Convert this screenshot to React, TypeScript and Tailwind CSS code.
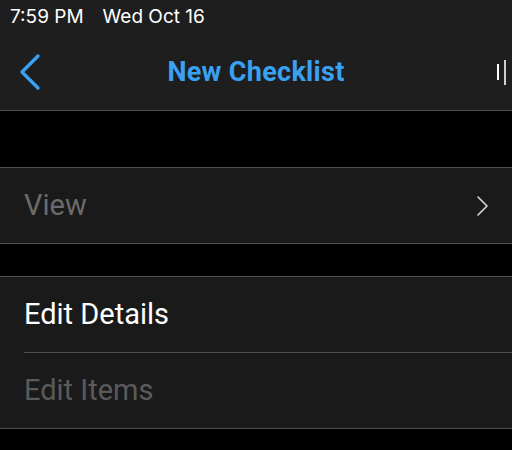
const rowFont = { fontFamily: 'Roboto, "Noto Sans", sans-serif' };

function BackChevron() {
    return (
        <svg width="24" height="38" viewBox="0 0 24 38" fill="none">
            <polyline
                points="19,3 3,19 19,35"
                stroke="#3aa0f2"
                strokeWidth="3.4"
                strokeLinecap="round"
                strokeLinejoin="round"
            />
        </svg>
    );
}

function RowChevron() {
    return (
        <svg width="14" height="22" viewBox="0 0 14 22" fill="none">
            <polyline
                points="3,2 12,11 3,20"
                stroke="#d8d8d8"
                strokeWidth="1.6"
                strokeLinecap="round"
                strokeLinejoin="round"
            />
        </svg>
    );
}

export default function App() {
    return (
        <div className="h-[450px] w-full overflow-hidden bg-black" style={rowFont}>
            {/* header: status bar + nav */}
            <div className="bg-[#1e1e1e] border-b border-[#505050]">
                <div
                    className="h-[34px] flex items-center px-[10px] gap-[19px] text-[19px] text-white"
                    style={{ fontFamily: 'Inter, "Noto Sans", sans-serif' }}
                >
                    <span>7:59 PM</span>
                    <span>Wed Oct 16</span>
                </div>
                <div className="h-[76px] grid grid-cols-[1fr_auto_1fr] items-center">
                    <div className="pl-[19px] flex items-center">
                        <BackChevron />
                    </div>
                    <h1 className="text-[27px] font-bold text-[#3aa0f2] tracking-[0.3px]">New Checklist</h1>
                    <div className="flex justify-end items-center gap-[5px] pr-[6px]">
                        <span className="w-[2px] h-[16px] bg-white" />
                        <span className="w-[2px] h-[25px] bg-[#cfcfcf]" />
                    </div>
                </div>
            </div>

            <div className="h-[56px]" />

            <div className="bg-[#1a1a1a] border-y border-[#505050]">
                <div className="h-[75px] flex items-center justify-between pl-[24px] pr-[23px]">
                    <span className="text-[29px] text-[#6b6b6b]">View</span>
                    <RowChevron />
                </div>
            </div>

            <div className="h-[32px]" />

            <div className="bg-[#1a1a1a] border-y border-[#505050]">
                <div className="h-[75px] flex items-center pl-[24px]">
                    <span className="text-[29px] text-white">Edit Details</span>
                </div>
                <div className="ml-[24px] h-px bg-[#505050]" />
                <div className="h-[75px] flex items-center pl-[24px]">
                    <span className="text-[29px] text-[#5a5a5a]">Edit Items</span>
                </div>
            </div>
        </div>
    );
}
